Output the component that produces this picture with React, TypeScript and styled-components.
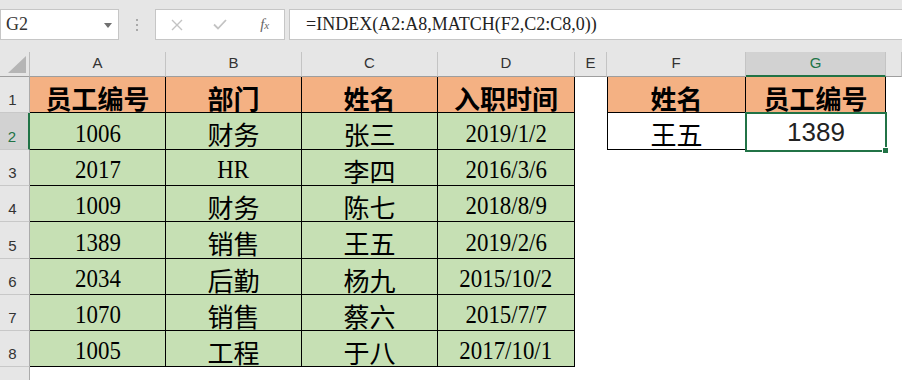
import React from 'react';
import styled, { createGlobalStyle, css } from 'styled-components';

const SERIF = `"Liberation Serif", "Noto Sans CJK SC", serif`;
const SANS = `"Liberation Sans", "Noto Sans CJK SC", sans-serif`;
const GREEN = '#217346';

type Row = [string, string, string, string];

const staff: Row[] = [
  ['1006', '财务', '张三', '2019/1/2'],
  ['2017', 'HR', '李四', '2016/3/6'],
  ['1009', '财务', '陈七', '2018/8/9'],
  ['1389', '销售', '王五', '2019/2/6'],
  ['2034', '后勤', '杨九', '2015/10/2'],
  ['1070', '销售', '蔡六', '2015/7/7'],
  ['1005', '工程', '于八', '2017/10/1'],
];

const letters = ['A', 'B', 'C', 'D', 'E', 'F', 'G', ''];

const isCjk = (s: string) => /[\u4e00-\u9fff]/.test(s);

const App: React.FC = () => {
  return (
    <Page>
      <GlobalStyle />
      <FormulaBar>
        <NameBox>
          G2
          <Caret />
        </NameBox>
        <Grip>
          <i />
          <i />
          <i />
        </Grip>
        <ActionBox>
          <Action>
            <svg width="12" height="12" viewBox="0 0 12 12">
              <path d="M1 1 L11 11 M11 1 L1 11" stroke="#c3c3c3" strokeWidth="1.4" fill="none" />
            </svg>
          </Action>
          <Action>
            <svg width="14" height="11" viewBox="0 0 14 11">
              <path d="M1 5.5 L5 9.5 L13 1" stroke="#c3c3c3" strokeWidth="1.8" fill="none" />
            </svg>
          </Action>
          <Action>
            <Fx>
              f<small>x</small>
            </Fx>
          </Action>
        </ActionBox>
        <FormulaInput>=INDEX(A2:A8,MATCH(F2,C2:C8,0))</FormulaInput>
      </FormulaBar>

      <Sheet>
        <Corner>
          <CornerMark />
        </Corner>
        {letters.map((l, i) => (
          <ColHead key={i} $active={l === 'G'}>
            {l}
          </ColHead>
        ))}

        {/* row 1: headers */}
        <RowHead>1</RowHead>
        {['员工编号', '部门', '姓名', '入职时间'].map((t) => (
          <Cell key={t} $fill="#f4b183" $boxed $head>
            {t}
          </Cell>
        ))}
        <Cell />
        <Cell $fill="#f4b183" $boxed $left $head>
          姓名
        </Cell>
        <Cell $fill="#f4b183" $boxed $head>
          员工编号
        </Cell>
        <Cell />

        {staff.map((row, r) => (
          <React.Fragment key={r}>
            <RowHead $active={r === 0}>{r + 2}</RowHead>
            {row.map((v, c) => (
              <Cell key={c} $fill="#c6e0b4" $boxed>
                {isCjk(v) ? v : <Narrow>{v}</Narrow>}
              </Cell>
            ))}
            <Cell />
            {r === 0 ? (
              <>
                <Cell $boxed $left>
                  王五
                </Cell>
                <ActiveCell>1389</ActiveCell>
              </>
            ) : (
              <>
                <Cell />
                <Cell />
              </>
            )}
            <Cell />
          </React.Fragment>
        ))}

        {/* top sliver of row 9 */}
        <RowHead />
        {letters.map((_, i) => (
          <Cell key={i} />
        ))}
      </Sheet>
    </Page>
  );
};

const GlobalStyle = createGlobalStyle`
  html, body, #root {
    margin: 0;
    height: 100%;
  }
  body {
    overflow: hidden;
    background: #fff;
    font-family: ${SANS};
  }
`;

const Page = styled.div`
  display: flex;
  flex-direction: column;
  height: 100vh;
  overflow: hidden;
`;

const FormulaBar = styled.div`
  flex-shrink: 0;
  display: flex;
  align-items: flex-start;
  height: 52px;
  padding-top: 9px;
  box-sizing: border-box;
  background: #e6e6e6;
  overflow: hidden;
`;

const boxFrame = css`
  height: 31px;
  box-sizing: border-box;
  border: 1px solid #c6c6c6;
  background: #fff;
`;

const NameBox = styled.div`
  ${boxFrame};
  width: 119px;
  display: flex;
  align-items: center;
  justify-content: space-between;
  padding: 0 6px 0 5px;
  font-family: ${SERIF};
  font-size: 18px;
  color: #333;
`;

const Caret = styled.span`
  width: 0;
  height: 0;
  border-left: 4px solid transparent;
  border-right: 4px solid transparent;
  border-top: 5px solid #707070;
  margin-top: 1px;
`;

const Grip = styled.div`
  width: 36px;
  height: 31px;
  display: flex;
  flex-direction: column;
  align-items: center;
  justify-content: center;
  gap: 3px;

  i {
    width: 2px;
    height: 2px;
    background: #a9a9a9;
  }
`;

const ActionBox = styled.div`
  ${boxFrame};
  width: 130px;
  display: flex;
`;

const Action = styled.div`
  flex: 1;
  display: flex;
  align-items: center;
  justify-content: center;
`;

const Fx = styled.span`
  font-family: ${SERIF};
  font-style: italic;
  font-size: 15px;
  color: #666;
  margin-left: 4px;

  small {
    font-size: 11px;
  }
`;

const FormulaInput = styled.div`
  ${boxFrame};
  flex: 1;
  margin: 0 -2px 0 4px;
  padding-left: 16px;
  font-family: ${SERIF};
  font-size: 18px;
  line-height: 29px;
  color: #222;
  white-space: nowrap;
`;

const Sheet = styled.div`
  flex: 1;
  min-height: 0;
  overflow: hidden;
  display: grid;
  grid-template-columns: 30px 136px 136px 136px 137px 32px 139px 140px 1fr;
  grid-template-rows: 25px 36px 37px 36px 36px 37px 36px 36px 36px 40px;
  background: #fff;
`;

const Corner = styled.div`
  display: flex;
  justify-content: flex-end;
  align-items: flex-end;
  padding: 0 3px 3px 0;
  background: #e6e6e6;
  border-right: 1px solid #bcbcbc;
  border-bottom: 1px solid #9e9e9e;
`;

const CornerMark = styled.div`
  width: 0;
  height: 0;
  border-left: 18px solid transparent;
  border-bottom: 17px solid #b5b5b5;
`;

const ColHead = styled.div<{ $active?: boolean }>`
  display: flex;
  align-items: center;
  justify-content: center;
  padding-bottom: 3px;
  box-sizing: border-box;
  font-family: ${SANS};
  font-size: 15px;
  color: ${(p) => (p.$active ? GREEN : '#333')};
  background: ${(p) => (p.$active ? '#d2d2d2' : '#e6e6e6')};
  border-right: 1px solid #c4c4c4;
  border-bottom: ${(p) => (p.$active ? `2px solid ${GREEN}` : '1px solid #9e9e9e')};
`;

const RowHead = styled.div<{ $active?: boolean }>`
  display: flex;
  align-items: flex-end;
  justify-content: center;
  padding: 0 4px 5px 0;
  box-sizing: border-box;
  font-family: ${SANS};
  font-size: 15px;
  line-height: 15px;
  color: ${(p) => (p.$active ? GREEN : '#333')};
  background: ${(p) => (p.$active ? '#d2d2d2' : '#e6e6e6')};
  border-right: ${(p) => (p.$active ? `2px solid ${GREEN}` : '1px solid #ababab')};
  border-bottom: 1px solid #c8c8c8;
`;

interface CellProps {
  $fill?: string;
  $boxed?: boolean;
  $left?: boolean;
  $head?: boolean;
}

const Cell = styled.div<CellProps>`
  display: flex;
  align-items: center;
  justify-content: center;
  padding-top: 5px;
  box-sizing: border-box;
  white-space: nowrap;
  font-family: ${SERIF};
  font-size: 26px;
  font-weight: ${(p) => (p.$head ? 700 : 400)};
  color: #000;
  background: ${(p) => p.$fill ?? '#fff'};
  ${(p) =>
    p.$boxed &&
    css`
      border-right: 1px solid #000;
      border-bottom: 1px solid #000;
    `}
  ${(p) => p.$left && 'border-left: 1px solid #000;'}
`;

// numbers and dates are set in a tall, narrow face
const Narrow = styled.span`
  display: inline-block;
  transform: scaleX(0.88);
`;

// G2: the selected cell with its green frame and fill handle
const ActiveCell = styled(Cell)`
  position: relative;
  font-family: ${SANS};
  font-size: 26px;
  color: #222;
  padding-top: 2px;

  &::after {
    content: '';
    position: absolute;
    inset: -1px -1px -2px -1px;
    border: 2px solid ${GREEN};
  }

  &::before {
    content: '';
    position: absolute;
    right: -3px;
    bottom: -4px;
    width: 5px;
    height: 5px;
    background: ${GREEN};
    border: 1px solid #fff;
    z-index: 1;
  }
`;

export default App;
